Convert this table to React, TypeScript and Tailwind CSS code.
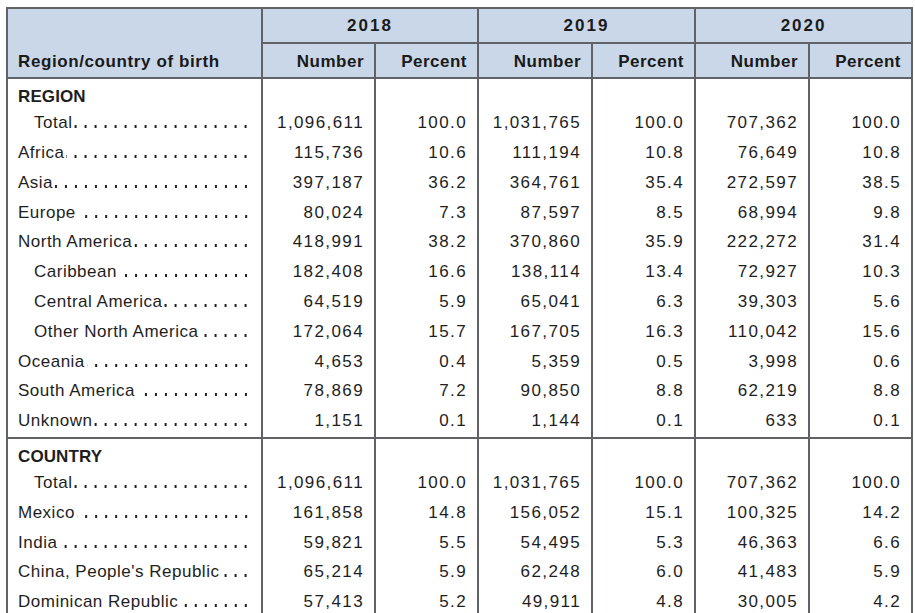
type Row = { label: string; indent?: boolean; values: string[] }

const regionRows: Row[] = [
  { label: 'Total', indent: true, values: ['1,096,611', '100.0', '1,031,765', '100.0', '707,362', '100.0'] },
  { label: 'Africa', values: ['115,736', '10.6', '111,194', '10.8', '76,649', '10.8'] },
  { label: 'Asia', values: ['397,187', '36.2', '364,761', '35.4', '272,597', '38.5'] },
  { label: 'Europe', values: ['80,024', '7.3', '87,597', '8.5', '68,994', '9.8'] },
  { label: 'North America', values: ['418,991', '38.2', '370,860', '35.9', '222,272', '31.4'] },
  { label: 'Caribbean', indent: true, values: ['182,408', '16.6', '138,114', '13.4', '72,927', '10.3'] },
  { label: 'Central America', indent: true, values: ['64,519', '5.9', '65,041', '6.3', '39,303', '5.6'] },
  { label: 'Other North America', indent: true, values: ['172,064', '15.7', '167,705', '16.3', '110,042', '15.6'] },
  { label: 'Oceania', values: ['4,653', '0.4', '5,359', '0.5', '3,998', '0.6'] },
  { label: 'South America', values: ['78,869', '7.2', '90,850', '8.8', '62,219', '8.8'] },
  { label: 'Unknown', values: ['1,151', '0.1', '1,144', '0.1', '633', '0.1'] },
]

const countryRows: Row[] = [
  { label: 'Total', indent: true, values: ['1,096,611', '100.0', '1,031,765', '100.0', '707,362', '100.0'] },
  { label: 'Mexico', values: ['161,858', '14.8', '156,052', '15.1', '100,325', '14.2'] },
  { label: 'India', values: ['59,821', '5.5', '54,495', '5.3', '46,363', '6.6'] },
  { label: "China, People's Republic", values: ['65,214', '5.9', '62,248', '6.0', '41,483', '5.9'] },
  { label: 'Dominican Republic', values: ['57,413', '5.2', '49,911', '4.8', '30,005', '4.2'] },
]

const cellBorder = 'border-x-2 border-[#5f6266]'

function DataRow({ row }: { row: Row }) {
  return (
    <tr className="h-[29.8px]">
      <td className={`${cellBorder} pr-[10px] ${row.indent ? 'pl-[26px]' : 'pl-[10px]'}`}>
        <div className="flex items-baseline whitespace-nowrap tracking-[0.5px]">
          <span className="pr-[2px]">{row.label}</span>
          {/* dot leader, aligned to the right edge so the dots line up row to row */}
          <span className="h-[3px] min-w-0 flex-1 bg-[radial-gradient(circle,#222_1.15px,transparent_1.5px)] bg-[length:10px_3px] bg-right bg-repeat-x" />
        </div>
      </td>
      {row.values.map((v, i) => (
        <td key={i} className={`${cellBorder} pr-[10px] text-right tracking-[1.4px]`}>
          {v}
        </td>
      ))}
    </tr>
  )
}

function SectionLabel({ label }: { label: string }) {
  return (
    <tr>
      <td className={`${cellBorder} pl-[10px] pt-[7px] pb-0 text-left font-bold leading-[22px] tracking-[0.1px]`}>
        {label}
      </td>
      {[0, 1, 2, 3, 4, 5].map((i) => (
        <td key={i} className={cellBorder} />
      ))}
    </tr>
  )
}

export default function App() {
  return (
    <div className="h-[613px] w-[915px] overflow-hidden bg-white pl-[6px] pt-[7px] font-['Liberation_Sans',Arial,sans-serif] text-[17px] text-[#1e1e1e]">
      <table className="w-[905px] table-fixed border-collapse">
        <colgroup>
          <col className="w-[255px]" />
          <col className="w-[113px]" />
          <col className="w-[103px]" />
          <col className="w-[114px]" />
          <col className="w-[103px]" />
          <col className="w-[114px]" />
          <col className="w-[103px]" />
        </colgroup>
        <thead className="bg-[#c9d7e8] text-[#1a1a1a]">
          <tr className="h-[35px]">
            <th
              rowSpan={2}
              className="border-2 border-[#5f6266] pb-[3px] pl-[10px] text-left align-bottom font-bold tracking-[0.6px]"
            >
              Region/country of birth
            </th>
            {['2018', '2019', '2020'].map((y) => (
              <th key={y} colSpan={2} className="border-2 border-[#5f6266] text-center font-bold tracking-[2px]">
                {y}
              </th>
            ))}
          </tr>
          <tr className="h-[35px]">
            {['Number', 'Percent', 'Number', 'Percent', 'Number', 'Percent'].map((h, i) => (
              <th
                key={i}
                className="border-2 border-[#5f6266] pb-[3px] pr-[10px] text-right align-bottom font-bold tracking-[0.5px]"
              >
                {h}
              </th>
            ))}
          </tr>
        </thead>
        <tbody>
          <SectionLabel label="REGION" />
          {regionRows.map((r, i) => (
            <DataRow key={i} row={r} />
          ))}
          <tr className="h-[2px]">
            {[0, 1, 2, 3, 4, 5, 6].map((i) => (
              <td key={i} className={cellBorder} />
            ))}
          </tr>
        </tbody>
        <tbody className="border-t-2 border-[#5f6266]">
          <SectionLabel label="COUNTRY" />
          {countryRows.map((r, i) => (
            <DataRow key={i} row={r} />
          ))}
        </tbody>
      </table>
    </div>
  )
}
